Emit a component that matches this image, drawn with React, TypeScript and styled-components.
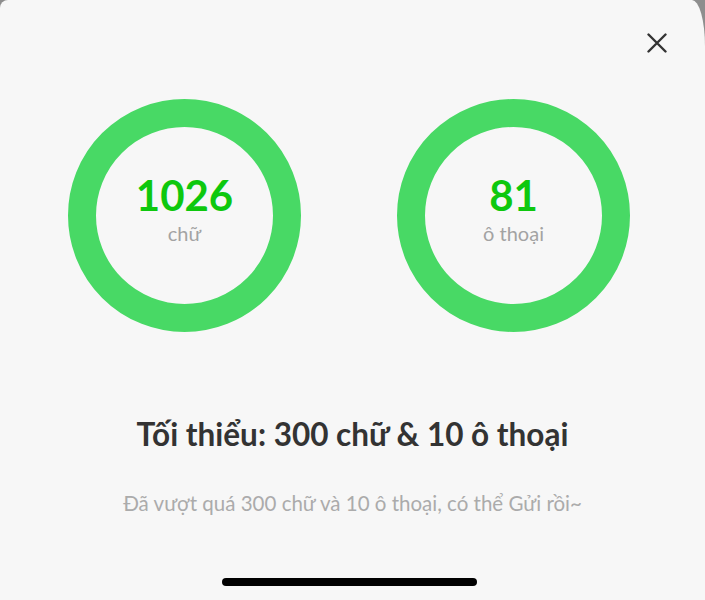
import styled, { createGlobalStyle } from "styled-components";

const GlobalStyle = createGlobalStyle`
  html, body {
    margin: 0;
    padding: 0;
    background: #8e8e8e;
    overflow: hidden;
  }

  * {
    box-sizing: border-box;
  }
`;

const Sheet = styled.div`
  width: 705px;
  height: 600px;
  display: flex;
  flex-direction: column;
  align-items: center;
  background: #f7f7f7;
  border-top-left-radius: 8px;
  border-top-right-radius: 13px 46px;
  font-family: Lato, "Noto Sans", sans-serif;
`;

const TopBar = styled.div`
  align-self: stretch;
  display: flex;
  justify-content: flex-end;
  padding: 33px 38px 0 0;
`;

const CloseButton = styled.button`
  width: 20px;
  height: 20px;
  padding: 0;
  border: none;
  background: transparent;
  display: inline-flex;
  cursor: pointer;
`;

const Counters = styled.div`
  align-self: stretch;
  display: flex;
  gap: 96px;
  padding-left: 68px;
  margin-top: 46px;
`;

const Ring = styled.div`
  width: 233px;
  height: 233px;
  border-radius: 50%;
  border: 28px solid #48d965;
  padding-bottom: 14px;
  display: flex;
  flex-direction: column;
  align-items: center;
  justify-content: center;
`;

const Count = styled.span`
  color: #0ec80e;
  font-size: 42px;
  font-weight: 700;
  line-height: 46px;
`;

const Unit = styled.span`
  color: #a3a3a3;
  font-size: 20px;
  line-height: 24px;
  margin-top: 3px;
`;

const Title = styled.h2`
  margin: 84px 0 0;
  color: #333333;
  font-size: 31.5px;
  font-weight: 700;
  line-height: 36px;
`;

const Hint = styled.p`
  margin: 38px 0 0;
  color: #ababab;
  font-size: 20.5px;
  line-height: 26px;
`;

const HomeIndicator = styled.div`
  align-self: flex-start;
  margin: auto 0 14px 222px;
  width: 255px;
  height: 8px;
  border-radius: 4px;
  background: #000000;
`;

const counters = [
  { value: 1026, unit: "chữ" },
  { value: 81, unit: "ô thoại" },
];

export default function App() {
  return (
    <>
      <GlobalStyle />
      <Sheet>
        <TopBar>
          <CloseButton aria-label="Đóng" type="button">
            <svg width="20" height="20" viewBox="0 0 20 20">
              <path d="M1.5 1.5 L18.5 18.5 M18.5 1.5 L1.5 18.5" stroke="#333" strokeWidth="2.4" strokeLinecap="round" />
            </svg>
          </CloseButton>
        </TopBar>

        <Counters>
          {counters.map((item) => (
            <Ring key={item.unit}>
              <Count>{item.value}</Count>
              <Unit>{item.unit}</Unit>
            </Ring>
          ))}
        </Counters>

        <Title>Tối thiểu: 300 chữ &amp; 10 ô thoại</Title>
        <Hint>Đã vượt quá 300 chữ và 10 ô thoại, có thể Gửi rồi~</Hint>

        <HomeIndicator />
      </Sheet>
    </>
  );
}
